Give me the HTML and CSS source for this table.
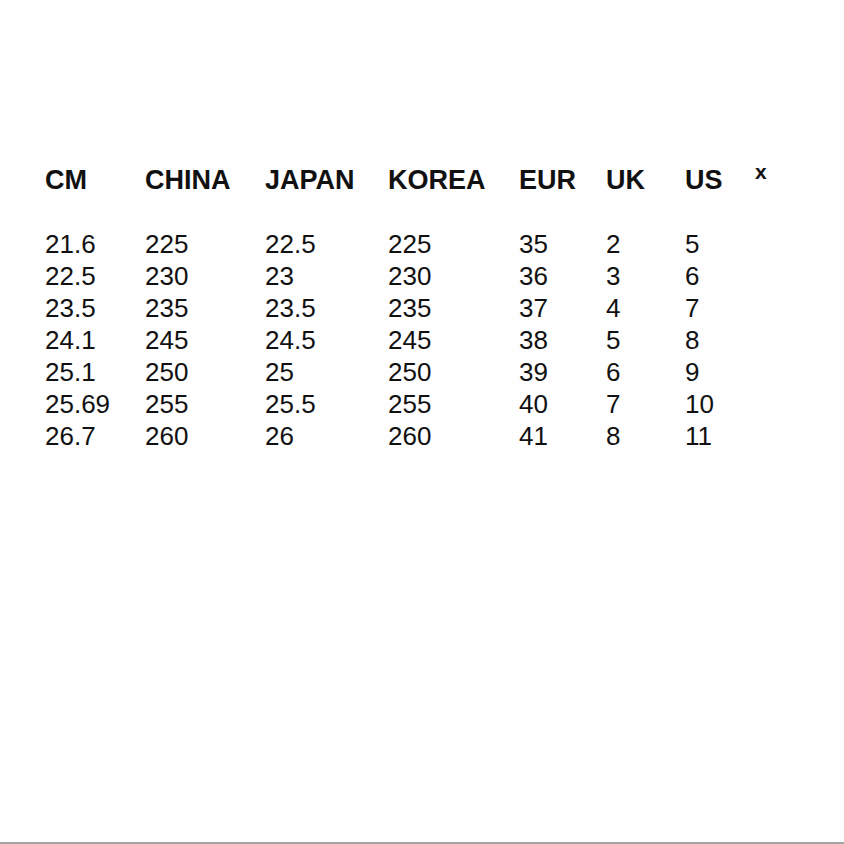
FILE: index.html
```html
<!DOCTYPE html>
<html>
<head>
<meta charset="utf-8">
<link rel="stylesheet" href="styles.css">
</head>
<body>
<div class="page">
  <div class="chart">
    <div class="row head">
      <span>CM</span><span>CHINA</span><span>JAPAN</span><span>KOREA</span><span>EUR</span><span>UK</span><span>US</span><span class="close">x</span>
    </div>
    <div class="rows">
      <div class="row"><span>21.6</span><span>225</span><span>22.5</span><span>225</span><span>35</span><span>2</span><span>5</span></div>
      <div class="row"><span>22.5</span><span>230</span><span>23</span><span>230</span><span>36</span><span>3</span><span>6</span></div>
      <div class="row"><span>23.5</span><span>235</span><span>23.5</span><span>235</span><span>37</span><span>4</span><span>7</span></div>
      <div class="row"><span>24.1</span><span>245</span><span>24.5</span><span>245</span><span>38</span><span>5</span><span>8</span></div>
      <div class="row"><span>25.1</span><span>250</span><span>25</span><span>250</span><span>39</span><span>6</span><span>9</span></div>
      <div class="row"><span>25.69</span><span>255</span><span>25.5</span><span>255</span><span>40</span><span>7</span><span>10</span></div>
      <div class="row"><span>26.7</span><span>260</span><span>26</span><span>260</span><span>41</span><span>8</span><span>11</span></div>
    </div>
  </div>
</div>
</body>
</html>
```
FILE: styles.css
```css
html, body {
  margin: 0;
  padding: 0;
  background: #fefefe;
}
.page {
  box-sizing: border-box;
  height: 844px;
  padding: 164px 0 0 45px;
  border-bottom: 2px solid #a3a3a3;
  font-family: "Liberation Sans", Arial, sans-serif;
  color: #111;
}
.row {
  display: grid;
  grid-template-columns: 100px 120px 123px 131px 87px 79px 70px auto;
  font-size: 26px;
  line-height: 32px;
}
.head {
  font-size: 27px;
  font-weight: bold;
}
.rows {
  margin-top: 32px;
}
.close {
  font-size: 21px;
  line-height: 16px;
  align-self: start;
  font-weight: bold;
}
```
